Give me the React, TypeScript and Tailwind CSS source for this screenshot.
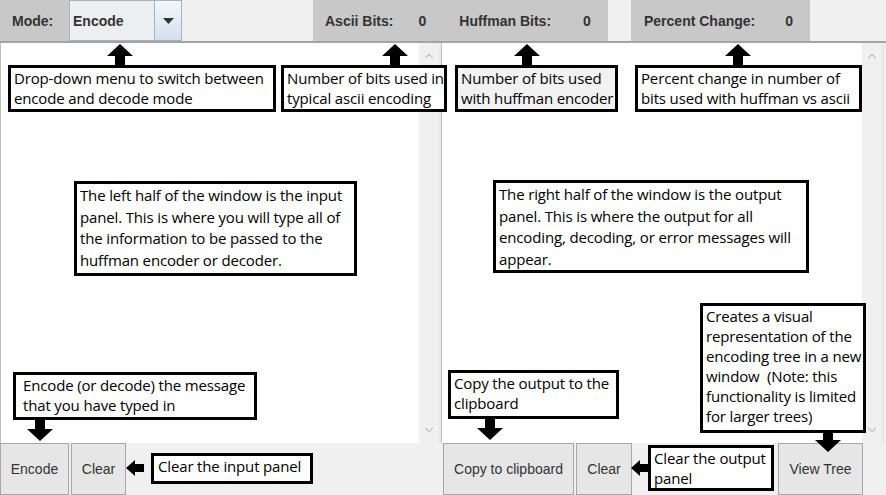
import { ChevronUp, ChevronDown } from 'lucide-react'

const note = "font-['Open_Sans',sans-serif] text-[15px] leading-[20px] text-black whitespace-nowrap tracking-[-0.15px]"

function Arrow({ dir, className }: { dir: 'up' | 'down' | 'left'; className: string }) {
  const rot = dir === 'up' ? '' : dir === 'down' ? 'rotate(180 13 11)' : ''
  if (dir === 'left') {
    return (
      <svg className={className} width="18" height="18" viewBox="0 0 18 18">
        <polygon points="0,9 9,1 9,5 18,5 18,13 9,13 9,17" fill="black" />
      </svg>
    )
  }
  return (
    <svg className={className} width="26" height="22" viewBox="0 0 26 22">
      <g transform={rot}>
        <polygon points="13,0 26,12 18,12 18,22 8,22 8,12 0,12" fill="black" />
      </g>
    </svg>
  )
}

function Note({ className, children }: { className: string; children: React.ReactNode }) {
  return (
    <div className={`absolute border-[3px] border-black bg-white px-[3px] ${note} ${className}`}>
      {children}
    </div>
  )
}

function Pane({ right }: { right?: boolean }) {
  return (
    <div className={`flex h-full ${right ? 'w-[443px]' : 'w-[441px]'} border-l border-[#bfbfbf]`}>
      <div className="flex-1 bg-white" />
      <div className="w-[20px] bg-[#f0f0f0] flex flex-col items-center justify-between py-[6px] text-[#c4c4c4]">
        <ChevronUp size={14} strokeWidth={2} />
        <ChevronDown size={14} strokeWidth={2} />
      </div>
      <div className="w-[2px] bg-[#e8e8e8]" />
    </div>
  )
}

function Btn({ w, children }: { w: string; children: React.ReactNode }) {
  return (
    <div className={`${w} h-[52px] border border-[#a7a7a7] bg-[#e6e6e6] flex items-center justify-center text-[14px] text-[#333]`}>
      {children}
    </div>
  )
}

export default function App() {
  return (
    <div className="relative w-[886px] h-[495px] overflow-hidden bg-[#f0f0f0] flex flex-col font-['Liberation_Sans',sans-serif]">
      {/* top bar */}
      <div className="h-[43px] flex border-b-2 border-[#a4a4a4] text-[14px] font-bold text-[#333]">
        <div className="w-[69px] bg-[#c8c8c8] flex items-center pl-[12px] pt-[1px]">Mode:</div>
        <div className="w-[113px] h-[41px] flex border border-[#a3b3c6] bg-[#eceef0]">
          <div className="flex-1 flex items-center pl-[3px] pt-[1px]">Encode</div>
          <div className="w-[27px] border-l border-[#a3b3c6] bg-gradient-to-b from-[#f4f7fb] to-[#d4e0ed] flex items-center justify-center">
            <svg width="11" height="6" viewBox="0 0 11 6"><polygon points="0,0 11,0 5.5,6" fill="#333" /></svg>
          </div>
        </div>
        <div className="w-[131px]" />
        <div className="w-[295px] bg-[#c8c8c8] flex items-center pt-[1px]">
          <span className="ml-[12px]">Ascii Bits:</span>
          <span className="ml-[25px]">0</span>
          <span className="ml-[33px]">Huffman Bits:</span>
          <span className="ml-[32px]">0</span>
        </div>
        <div className="w-[23px]" />
        <div className="w-[179px] bg-[#c8c8c8] flex items-center pt-[1px]">
          <span className="ml-[13px]">Percent Change:</span>
          <span className="ml-[30px]">0</span>
        </div>
      </div>

      {/* panes */}
      <div className="flex-1 flex">
        <Pane />
        <Pane right />
      </div>

      {/* bottom bar */}
      <div className="h-[52px] flex">
        <div className="w-[443px] flex gap-[2px]">
          <Btn w="w-[69px]">Encode</Btn>
          <Btn w="w-[55px]">Clear</Btn>
        </div>
        <div className="flex-1 flex">
          <Btn w="w-[131px]">Copy to clipboard</Btn>
          <div className="w-[2px]" />
          <Btn w="w-[56px]">Clear</Btn>
          <div className="w-[146px]" />
          <Btn w="w-[85px]">View Tree</Btn>
        </div>
      </div>

      {/* annotations */}
      <Arrow dir="up" className="absolute left-[107px] top-[44px]" />
      <Note className="left-[8px] top-[65px] w-[268px] h-[47px]">Drop-down menu to switch between<br />encode and decode mode</Note>

      <Arrow dir="up" className="absolute left-[382px] top-[44px]" />
      <Note className="left-[281px] top-[65px] w-[166px] h-[47px]">Number of bits used in<br />typical ascii encoding</Note>

      <Arrow dir="up" className="absolute left-[514px] top-[44px]" />
      <Note className="left-[455px] top-[65px] w-[163px] h-[47px] !bg-[#f2f2f2]">Number of bits used<br />with huffman encoder</Note>

      <Arrow dir="up" className="absolute left-[725px] top-[44px]" />
      <Note className="left-[635px] top-[65px] w-[227px] h-[47px]">Percent change in number of<br />bits used with huffman vs ascii</Note>

      <Note className="left-[74px] top-[181px] w-[283px] h-[95px] !leading-[21.5px] pt-[1px]">
        The left half of the window is the input<br />panel. This is where you will type all of<br />the information to be passed to the<br />huffman encoder or decoder.
      </Note>

      <Note className="left-[493px] top-[180px] w-[316px] h-[93px] !leading-[21.5px] pt-[1px]">
        The right half of the window is the output<br />panel. This is where the output for all<br />encoding, decoding, or error messages will<br />appear.
      </Note>

      <Note className="left-[13px] top-[372px] w-[244px] h-[48px] pl-[7px]">Encode (or decode) the message<br />that you have typed in</Note>
      <Arrow dir="down" className="absolute left-[27px] top-[419px]" />

      <Note className="left-[151px] top-[453px] w-[162px] h-[31px] pl-[4px]">Clear the input panel</Note>
      <Arrow dir="left" className="absolute left-[126px] top-[459px]" />

      <Note className="left-[448px] top-[370px] w-[171px] h-[49px]">Copy the output to the<br />clipboard</Note>
      <Arrow dir="down" className="absolute left-[477px] top-[418px]" />

      <Note className="left-[700px] top-[303px] w-[166px] h-[130px]">
        Creates a visual<br />representation of the<br />encoding tree in a new<br />window&nbsp; (Note: this<br />functionality is limited<br />for larger trees)
      </Note>
      <Arrow dir="down" className="absolute left-[815px] top-[430px]" />

      <Note className="left-[648px] top-[445px] w-[126px] h-[46px]">Clear the output<br />panel</Note>
      <Arrow dir="left" className="absolute left-[631px] top-[459px]" />
    </div>
  )
}
